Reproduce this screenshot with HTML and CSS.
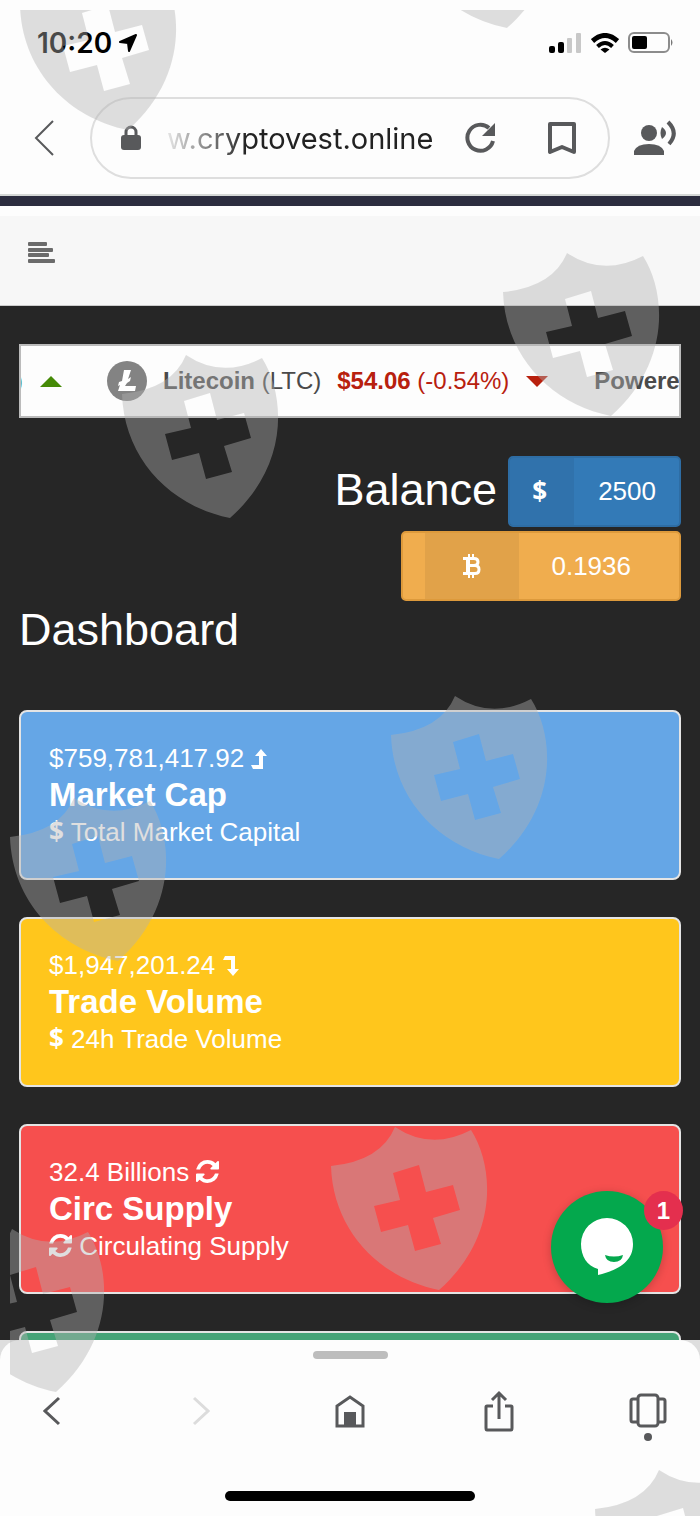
FILE: index.html
```
<!DOCTYPE html>
<html lang="en">
<head>
<meta charset="UTF-8" />
<meta name="viewport" content="width=device-width, initial-scale=1" />
<title>Dashboard</title>

<link rel="stylesheet" href="styles.css">
</head>
<body>

<!-- icons used more than once -->
<svg class="defs" width="0" height="0">
	<symbol id="shield" viewBox="0 0 160 166">
		<path fill-rule="evenodd" d="M0 40Q50 35 64 1Q100 25 140 4C164 42 167 112 108 164C48 152 2 104 0 40ZM62 47L69 74L43 80L50 106L77 99L84 125L110 118L102 92L129 84L122 59L95 66L88 39Z"/>
	</symbol>
	<symbol id="refresh" viewBox="128 128 1536 1536">
		<path d="M1639 1056q0 5-1 7-64 268-268 434.500t-478 166.500q-146 0-282.500-55t-243.500-157l-129 129q-19 19-45 19t-45-19-19-45v-448q0-26 19-45t45-19h448q26 0 45 19t19 45-19 45l-137 137q71 66 161 102t187 36q134 0 250-65t186-179q11-17 53-117 8-23 30-23h192q13 0 22.500 9.500t9.500 22.500zm25-800v448q0 26-19 45t-45 19h-448q-26 0-45-19t-19-45 19-45l138-138q-148-137-349-137-134 0-250 65t-186 179q-11 17-53 117-8 23-30 23h-199q-13 0-22.500-9.500t-9.500-22.500v-7q65-268 270-434.500t480-166.500q146 0 284 55.500t245 156.500l130-129q19-19 45-19t45 19 19 45z"/>
	</symbol>
</svg>

<div class="app">

<div class="status">
	<div class="clock">10:20
		<svg width="20" height="20" viewBox="0 0 20 20"><path d="M18 2L11 18L10 10L2 9Z" stroke="#000" stroke-width="2" stroke-linejoin="round"/></svg>
	</div>
	<div class="signals">
		<svg width="33" height="20" viewBox="0 0 33 20">
			<rect x="0" y="13" width="6" height="7" rx="2"/>
			<rect x="9" y="9" width="6" height="11" rx="2"/>
			<rect x="18" y="5" width="5" height="15" rx="1" fill="#c8c8c8"/>
			<rect x="27" y="0" width="5" height="20" rx="1" fill="#c8c8c8"/>
		</svg>
		<svg width="28" height="20" viewBox="0 0 28 20" fill="none" stroke="#000" stroke-width="5">
			<path d="M1.500 8Q14-3 26.500 8"/>
			<path d="M6.500 13.500Q14 6.500 21.500 13.500" stroke-width="4"/>
			<path d="M9.500 16.500Q14 13 18.500 16.500L14 20Z" fill="#000" stroke="none"/>
		</svg>
		<svg width="46" height="22" viewBox="0 0 46 22">
			<rect x="1" y="1" width="40" height="19" rx="5" fill="none" stroke="#8c8c8c" stroke-width="2"/>
			<rect x="4" y="4" width="15" height="13" rx="2"/>
			<path d="M43 7Q46 10.500 43 14Z" fill="#777"/>
		</svg>
	</div>
</div>

<div class="browser">
	<button class="icon" aria-label="Back">
		<svg width="22" height="38" viewBox="0 0 22 38" fill="none" stroke="#58595b" stroke-width="2"><path d="M20 2L3 19L20 36"/></svg>
	</button>
	<div class="address">
		<svg width="20" height="26" viewBox="0 0 20 26">
			<rect x="0" y="10" width="20" height="15" rx="3" fill="#58595b"/>
			<path d="M5 11V7a5 5 0 0 1 10 0v4" fill="none" stroke="#58595b" stroke-width="3"/>
		</svg>
		<input class="url" type="text" aria-label="Address" value="w.cryptovest.online">
		<button class="icon" aria-label="Reload">
			<svg width="32" height="32" viewBox="0 0 32 32"><path d="M29 19A13 13 0 1 1 25 6" fill="none" stroke="#58595b" stroke-width="4"/><path d="M31 1V14H18Z" fill="#58595b"/></svg>
		</button>
		<button class="icon" aria-label="Bookmark">
			<svg width="28" height="34" viewBox="0 0 28 34"><path d="M2 31V3H26V31L14 26Z" fill="none" stroke="#58595b" stroke-width="4" stroke-linejoin="round"/></svg>
		</button>
	</div>
	<button class="icon" aria-label="Voice">
		<svg width="42" height="36" viewBox="0 0 42 36" fill="#58595b">
			<circle cx="15" cy="13" r="8"/>
			<path d="M0 35V31Q3 24 15 24T30 31V35Z"/>
			<path d="M28 7Q36 13 28 19Q25 13 28 7Z"/>
			<path d="M34 2Q45 13 35 24" fill="none" stroke="#58595b" stroke-width="4"/>
		</svg>
	</button>
</div>

<div class="navbar">
	<button class="icon" aria-label="Menu">
		<svg width="28" height="22" viewBox="0 0 28 22" fill="#6b6b6b">
			<rect x="0" y="0" width="19" height="4" rx="1"/>
			<rect x="0" y="6" width="25" height="4" rx="1"/>
			<rect x="0" y="11" width="21" height="4" rx="1"/>
			<rect x="0" y="17" width="27" height="4" rx="1"/>
		</svg>
	</button>
</div>

<main class="content">

	<div class="ticker">
		<span class="up">)</span>
		<span class="arrow-up"></span>
		<svg class="coin" width="42" height="42" viewBox="0 0 42 42">
			<circle cx="21" cy="21" r="20" fill="#838383"/>
			<path d="M18 10H25L22 19L25 17L24 21L21 23L19 26H30L29 31H12L14 25L12 26L13 22L16 21Z" fill="#fff"/>
		</svg>
		<span class="name"><b>Litecoin</b> (LTC)</span>
		<span class="down"><b>$54.06</b> (-0.54%)</span>
		<span class="arrow-down"></span>
		<b class="powered">Powered</b>
	</div>

	<div class="balance">
		<div class="line">
			<h2>Balance</h2>
			<button class="btn btn-primary"><span class="cell">$</span><span class="amount">2500</span></button>
		</div>
		<div class="line">
			<button class="btn btn-warning">
				<span class="cell">
					<svg width="18" height="24" viewBox="0 0 18 24" fill="none" stroke="#fff"><path stroke-width="3" d="M0 4.500H11Q15 4.500 15 8T11 11.500H5H12Q16 11.500 16 15.500T12 19.500H0"/><path stroke-width="4" d="M5 5V19"/><path stroke-width="2" d="M6 0V4M10 0V4M6 20V24M10 20V24"/></svg>
				</span><span class="amount">0.1936</span>
			</button>
		</div>
	</div>

	<h1>Dashboard</h1>

	<div class="cards">
		<div class="card blue">
			<p>$759,781,417.92 <svg width="16" height="20" viewBox="0 0 16 20"><path d="M10 0L16 7H12V20H2L0 16H8V7H4Z"/></svg></p>
			<h3>Market Cap</h3>
			<p><span class="usd">$</span> Total Market Capital</p>
		</div>
		<div class="card yellow">
			<p>$1,947,201.24 <svg width="16" height="20" viewBox="0 0 16 20"><path d="M10 20L16 13H12V0H2L0 4H8V13H4Z"/></svg></p>
			<h3>Trade Volume</h3>
			<p><span class="usd">$</span> 24h Trade Volume</p>
		</div>
		<div class="card red">
			<p>32.4 Billions <svg width="23" height="23"><use href="#refresh"/></svg></p>
			<h3>Circ Supply</h3>
			<p><svg width="23" height="23"><use href="#refresh"/></svg> Circulating Supply</p>
		</div>
		<div class="card green"></div>
	</div>

	<button class="chat" aria-label="Chat">
		<svg width="54" height="58" viewBox="0 0 54 58">
			<path d="M27 0A26 26 0 0 1 53 26C53 44 38 52 18 57V51C7 48 1 38 1 26A26 26 0 0 1 27 0Z" fill="#fff"/>
			<path d="M25 37Q34 40 43 37Q42 44 34 44T25 37Z" fill="#04a84d"/>
		</svg>
		<span class="badge">1</span>
	</button>
</main>

<div class="bottom">
	<div class="sheet">
		<div class="handle"></div>
		<nav class="tabs">
			<button class="icon" aria-label="Back">
				<svg width="18" height="30" viewBox="0 0 18 30" fill="none" stroke="#58595b" stroke-width="3"><path d="M16 2L2 15L16 28"/></svg>
			</button>
			<button class="icon" aria-label="Forward">
				<svg width="18" height="30" viewBox="0 0 18 30" fill="none" stroke="#dcdcdc" stroke-width="3"><path d="M2 2L16 15L2 28"/></svg>
			</button>
			<button class="icon" aria-label="Home">
				<svg width="32" height="34" viewBox="0 0 32 34"><path d="M3 32V12L16 3L29 12V32Z" fill="none" stroke="#58595b" stroke-width="3"/><rect x="10" y="18" width="12" height="13" fill="#58595b"/></svg>
			</button>
			<button class="icon" aria-label="Share">
				<svg width="32" height="42" viewBox="0 0 32 42" fill="none" stroke="#58595b" stroke-width="3"><path d="M10 16H4Q3 16 3 17V38Q3 40 4 40H28Q29 40 29 38V17Q29 16 28 16H22M16 29V4M9 10L16 3L23 10"/></svg>
			</button>
			<button class="icon" aria-label="Tabs">
				<svg width="38" height="60" viewBox="0 0 38 60" fill="none" stroke="#58595b" stroke-width="3">
					<rect x="9" y="14" width="20" height="31" rx="3"/>
					<path d="M9 18H4Q2 18 2 20V39Q2 41 4 41H9M29 18H34Q36 18 36 20V39Q36 41 34 41H29"/>
					<circle cx="19" cy="56" r="4" fill="#58595b" stroke="none"/>
				</svg>
			</button>
		</nav>
		<div class="home-bar"></div>
	</div>
</div>

<!-- shields scattered over the whole screen -->
<svg class="shields" fill="#b2b2b2" aria-hidden="true">
	<use href="#shield" x="10" y="-44" width="160" height="166"/>
	<use href="#shield" x="389" y="-146" width="160" height="166"/>
	<use href="#shield" x="493" y="242" width="160" height="166"/>
	<use href="#shield" x="112" y="344" width="160" height="166"/>
	<use href="#shield" x="381" y="685" width="160" height="166"/>
	<use href="#shield" x="0" y="787" width="160" height="166"/>
	<use href="#shield" x="321" y="1116" width="160" height="166"/>
	<use href="#shield" x="-62" y="1218" width="160" height="166"/>
	<use href="#shield" x="585" y="1459" width="160" height="166"/>
</svg>

</div>
</body>
</html>
```
FILE: styles.css
```
*
{
	box-sizing: border-box;
}

body
{
	margin: 0;
	font-family: "Liberation Sans", Arial, sans-serif;
	font-size: 26px;
	color: #fff;
	background: #fdfdfd;
}

h1, h2, h3, p
{
	margin: 0;
}

h1, h2
{
	font-size: 45px;
	font-weight: normal;
	line-height: 50px;
}

button
{
	padding: 0;
	border: 0;
	font: inherit;
	color: inherit;
	background: none;
}

.icon
{
	display: flex;
	flex-shrink: 0;
	align-items: center;
	justify-content: center;
}

.defs
{
	position: absolute;
}

.app
{
	position: relative;
	display: flex;
	flex-direction: column;
	height: 100vh;
	overflow: hidden;
}

.shields
{
	position: absolute;
	top: 10px;
	left: 10px;
	width: calc(100% - 10px);
	height: calc(100% - 10px);
	opacity: 0.41;
	overflow: hidden;
	pointer-events: none;
}

/* phone status bar */
.status
{
	display: flex;
	align-items: center;
	justify-content: space-between;
	padding: 26px 26px 0 37px;
	height: 60px;
	color: #000;
}

.clock
{
	display: flex;
	align-items: center;
	gap: 6px;
	font-family: Inter, sans-serif;
	font-size: 28px;
	font-weight: 600;
}

.signals
{
	display: flex;
	align-items: center;
	gap: 9px;
}

/* address bar */
.browser
{
	display: flex;
	align-items: center;
	gap: 24px;
	padding: 37px 24px 15px 33px;
	border-bottom: 2px solid #d5d8d6;
}

.address
{
	display: flex;
	flex: 1;
	align-items: center;
	gap: 26px;
	min-width: 0;
	height: 82px;
	margin-left: 11px;
	padding: 0 32px 0 29px;
	border: 2px solid #dedede;
	border-radius: 41px;
}

.address > svg
{
	flex-shrink: 0;
}

.address .icon + .icon
{
	margin-left: 26px;
}

.url
{
	flex: 1;
	min-width: 0;
	padding: 0;
	border: 0;
	outline: 0;
	font-family: Inter, sans-serif;
	font-size: 29px;
	color: #222;
	background: none;
	-webkit-mask-image: linear-gradient(to right, rgba(0, 0, 0, 0.1), #000 80px);
	mask-image: linear-gradient(to right, rgba(0, 0, 0, 0.1), #000 80px);
}

/* site header */
.navbar
{
	padding: 26px 28px 42px;
	border-top: 10px solid #2c2d3f;
	border-bottom: 1px solid #ccc;
	background: #f7f7f7;
	box-shadow: inset 0 10px #fdfdfd;
}

.navbar .icon
{
	margin-top: 10px;
	margin-bottom: -1px;
}

.content
{
	position: relative;
	flex: 1;
	min-height: 0;
	padding: 38px 19px 0;
	background: #262626;
	overflow: hidden;
}

/* coin prices */
.ticker
{
	display: flex;
	align-items: center;
	height: 74px;
	border: 2px solid #bbb;
	font-size: 24px;
	white-space: nowrap;
	color: #4a4a4a;
	background: #fdfdfd;
	overflow: hidden;
}

.ticker > *
{
	flex-shrink: 0;
}

.up
{
	margin-left: -6px;
	color: #458a06;
}

.arrow-up, .arrow-down
{
	border: 11px solid transparent;
}

.arrow-up
{
	margin: 0 44px 0 17px;
	border-top: 0;
	border-bottom-color: #458a06;
}

.coin
{
	margin-right: 15px;
}

.name
{
	margin-right: 16px;
}

.down
{
	color: #b8200e;
}

.arrow-down
{
	margin: 0 46px 0 17px;
	border-bottom: 0;
	border-top-color: #b8200e;
}

.balance
{
	display: flex;
	flex-direction: column;
	gap: 4px;
	margin: 38px 0 4px;
}

.line
{
	display: flex;
	align-items: center;
	justify-content: flex-end;
	gap: 11px;
}

.line h2
{
	padding-bottom: 4px;
}

.btn
{
	display: flex;
	height: 71px;
	border: 2px solid;
	border-radius: 5px;
	line-height: 67px;
}

.btn-primary
{
	padding-right: 23px;
	border-color: #2e6da4;
	background: #337ab7;
}

.btn-warning
{
	height: 70px;
	padding: 0 48px 0 22px;
	border-color: #dd9a3c;
	background: #f0ad4e;
}

.cell
{
	display: flex;
	align-items: center;
	justify-content: center;
	width: 64px;
	margin-right: 24px;
	font-family: "Open Sans", sans-serif;
	font-weight: bold;
	background: rgba(0, 0, 0, 0.06);
}

.btn-primary .cell
{
	padding-right: 5px;
}

.btn-warning .cell
{
	width: 94px;
	margin-right: 32px;
}

/* statistics */
.cards
{
	display: flex;
	flex-direction: column;
	gap: 37px;
	margin-top: 55px;
}

.card
{
	padding: 28px;
	border: 2px solid #e4e4e4;
	border-radius: 8px;
	line-height: 36px;
}

.card h3
{
	font-size: 33px;
	line-height: 38px;
}

.card svg
{
	vertical-align: -2px;
	fill: #fff;
}

.usd
{
	font-family: "Open Sans", sans-serif;
	font-weight: bold;
	line-height: 1;
}

.blue
{
	background: #65a6e6;
}

.yellow
{
	background: #ffc61c;
}

.red
{
	background: #f64f4e;
}

.green
{
	background: #45a377;
}

/* chat bubble over the cards */
.chat
{
	position: absolute;
	right: 37px;
	bottom: 37px;
	display: flex;
	align-items: center;
	justify-content: center;
	width: 112px;
	height: 112px;
	border-radius: 50%;
	background: #04a84d;
	box-shadow: 0 2px 10px rgba(0, 0, 0, 0.2);
}

.badge
{
	position: absolute;
	top: 0;
	right: -20px;
	width: 39px;
	border-radius: 50%;
	font-size: 24px;
	font-weight: bold;
	line-height: 39px;
	background: #e42f4e;
}

/* browser toolbar */
.bottom
{
	background: #dedede;
}

.sheet
{
	display: flex;
	flex-direction: column;
	align-items: center;
	padding: 11px 0 15px;
	border-radius: 20px 20px 0 0;
	background: #fdfdfd;
}

.handle
{
	width: 75px;
	height: 8px;
	border-radius: 4px;
	background: #bdbdbd;
}

.tabs
{
	display: flex;
	align-items: flex-start;
	justify-content: space-between;
	width: 100%;
	height: 132px;
	padding: 28px 32px 0;
}

.tabs .icon
{
	width: 40px;
	height: 48px;
}

.home-bar
{
	width: 250px;
	height: 10px;
	border-radius: 5px;
	background: #000;
}
```
